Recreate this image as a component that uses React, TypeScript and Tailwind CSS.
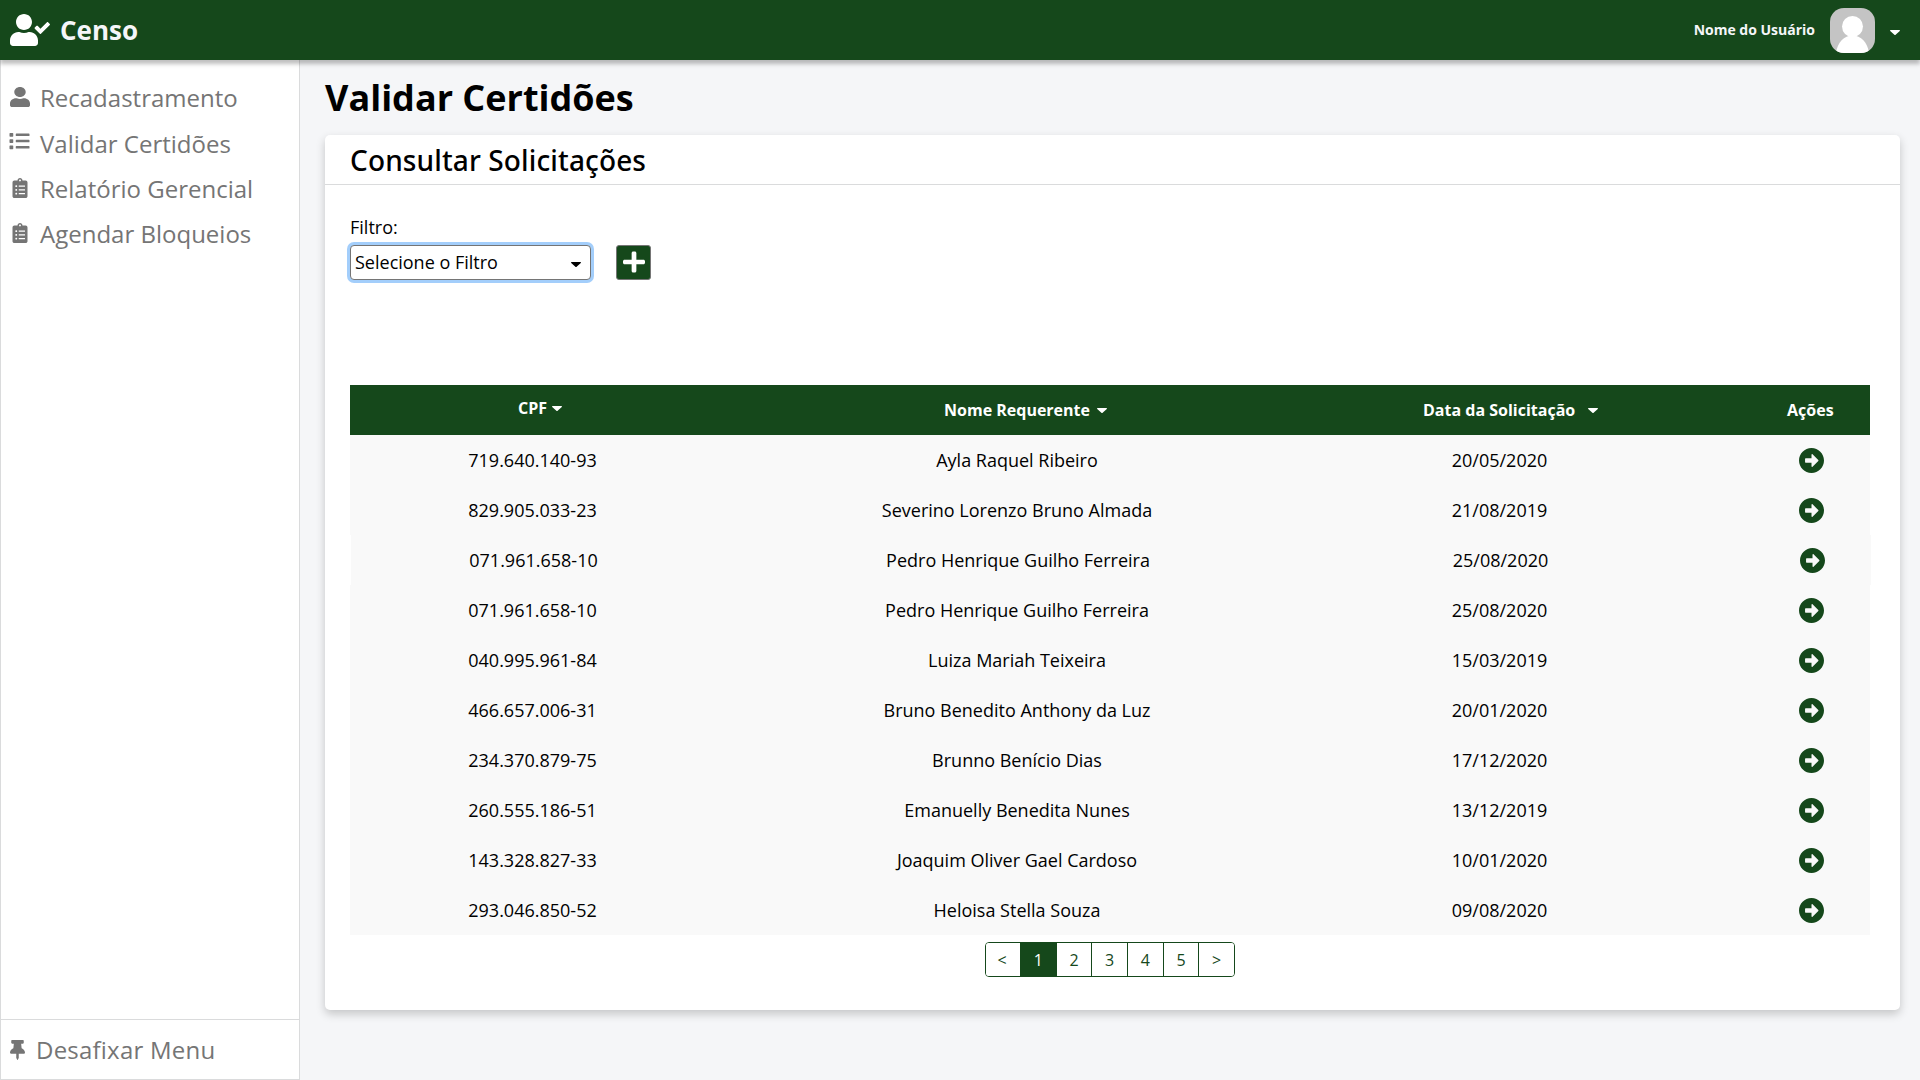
import React from "react";
import {
  FaArrowAltCircleRight,
  FaClipboardList,
  FaList,
  FaPlus,
  FaThumbtack,
  FaUser,
  FaUserCheck,
} from "react-icons/fa";

const rows = [
  ["719.640.140-93", "Ayla Raquel Ribeiro", "20/05/2020"],
  ["829.905.033-23", "Severino Lorenzo Bruno Almada", "21/08/2019"],
  ["071.961.658-10", "Pedro Henrique Guilho Ferreira", "25/08/2020"],
  ["071.961.658-10", "Pedro Henrique Guilho Ferreira", "25/08/2020"],
  ["040.995.961-84", "Luiza Mariah Teixeira", "15/03/2019"],
  ["466.657.006-31", "Bruno Benedito Anthony da Luz", "20/01/2020"],
  ["234.370.879-75", "Brunno Benício Dias", "17/12/2020"],
  ["260.555.186-51", "Emanuelly Benedita Nunes", "13/12/2019"],
  ["143.328.827-33", "Joaquim Oliver Gael Cardoso", "10/01/2020"],
  ["293.046.850-52", "Heloisa Stella Souza", "09/08/2020"],
];

function Caret({ className }: { className: string }) {
  return (
    <svg viewBox="0 0 10 5" className={className} fill="currentColor">
      <path d="M0.6 0H9.4C9.9 0 10.2 .6 9.8 1L5.6 4.8C5.3 5.1 4.7 5.1 4.4 4.8L.2 1C-.2 .6 .1 0 .6 0Z" />
    </svg>
  );
}

function Avatar() {
  return (
    <svg viewBox="0 0 45 45" className="h-[45px] w-[45px] rounded-[14px] bg-[#c4c4c4]">
      <circle cx="22.5" cy="18.5" r="10.5" fill="#fff" />
      <path d="M6 45C7.500 34 14 27.500 22.500 27.500S37.500 34 39 45Z" fill="#fff" />
    </svg>
  );
}

function Header() {
  return (
    <header className="relative z-10 flex h-[60px] shrink-0 items-center bg-[#15481b] pl-[10px] pr-5 text-white shadow-[0_4px_4px_rgba(0,0,0,0.25)]">
      <FaUserCheck className="h-8 w-10" />
      <span className="ml-[10px] text-[26px] font-bold text-[#f5f6f9]">Censo</span>
      <span className="ml-auto text-sm font-bold text-[#f5f6f9]">Nome do Usuário</span>
      <div className="ml-[15px]">
        <Avatar />
      </div>
      <Caret className="ml-[15px] mt-1 h-[5px] w-[10px]" />
    </header>
  );
}

function Sidebar() {
  return (
    <aside className="flex w-[300px] shrink-0 flex-col border border-t-0 border-[#dadbdc] bg-white text-2xl text-[#757575]">
      <nav className="flex flex-1 flex-col pl-[9px] pt-[15px]">
        <a className="flex h-[46px] items-center">
          <FaUser className="mb-[3px] h-5 w-5" preserveAspectRatio="none" />
          <span className="ml-[10px]">Recadastramento</span>
        </a>
        <a className="flex h-[45px] items-center">
          <FaList className="mb-[6px] -ml-px h-5 w-[21px]" />
          <span className="ml-[10px]">Validar Certidões</span>
        </a>
        <a className="flex h-[45px] items-center">
          <FaClipboardList className="mb-[2px] h-5 w-5" />
          <span className="ml-[10px]">Relatório Gerencial</span>
        </a>
        <a className="flex h-[45px] items-center">
          <FaClipboardList className="mb-[2px] h-5 w-5" />
          <span className="ml-[10px]">Agendar Bloqueios</span>
        </a>
      </nav>
      <a className="flex h-[60px] items-center border-t border-[#dadbdc] pl-[9px]">
        <FaThumbtack className="h-5 w-[15px]" />
        <span className="ml-[11px] tracking-[0.22px]">Desafixar Menu</span>
      </a>
    </aside>
  );
}

function Table() {
  return (
    <div className="mt-[105px] w-[1520px] text-black">
      <div className="grid h-[50px] grid-cols-[365px_604px_362px_189px] items-center bg-[#15481b] font-bold text-white">
        <div className="mb-1 flex items-center pl-[168px]">
          CPF
          <Caret className="ml-[5px] h-[5px] w-[10px]" />
        </div>
        <div className="flex items-center pl-[229px]">
          Nome Requerente
          <Caret className="ml-[7px] h-[5px] w-[10px]" />
        </div>
        <div className="flex items-center pl-[104px]">
          Data da Solicitação
          <Caret className="ml-[13px] h-[5px] w-[10px]" />
        </div>
        <div className="pl-[106px]">Ações</div>
      </div>
      {rows.map(([cpf, name, date], i) => (
        <div
          key={i}
          className={
            "grid h-[50px] grid-cols-[365px_604px_362px_189px] items-center bg-[#f9f9f9] text-center text-lg" +
            (i === 2 ? " translate-x-px" : "")
          }
        >
          <span>{cpf}</span>
          <span>{name}</span>
          <span className="pr-px">{date}</span>
          <FaArrowAltCircleRight
            viewBox="8 8 496 496"
            className="ml-[118px] mt-px h-[25px] w-[25px] text-[#15481b]"
          />
        </div>
      ))}
    </div>
  );
}

function Pagination() {
  return (
    <div className="ml-[635px] mt-[7px] flex h-[35px] w-[250px] divide-x divide-[#15481b] overflow-hidden rounded-[4px] border border-[#15481b] text-base text-[#15481b]">
      {["<", "1", "2", "3", "4", "5", ">"].map((p) => (
        <button
          key={p}
          className={
            "flex items-center justify-center " +
            (p === "<" ? "w-[35px] pr-0.5 " : "flex-1 ") +
            (p === "1" ? "bg-[#15481b] text-white" : "bg-white")
          }
        >
          {p}
        </button>
      ))}
    </div>
  );
}

export default function App() {
  return (
    <div className="flex h-[1080px] w-[1920px] flex-col overflow-hidden bg-[#f5f6f8] font-['Open_Sans','Noto_Sans',sans-serif]">
      <Header />
      <div className="flex flex-1">
        <Sidebar />
        <main className="flex-1 pl-[25px] pr-5 text-black">
          <h1 className="flex h-[75px] items-center text-4xl font-bold">Validar Certidões</h1>
          <section className="h-[875px] rounded-[5px] bg-white shadow-[0_4px_10px_rgba(0,0,0,0.2)]">
            <h2 className="flex h-[50px] items-center border-b border-[#dadbdc] pl-[25px] font-['Noto_Sans',sans-serif] text-[28px] font-medium tracking-[0.13px]">
              Consultar Solicitações
            </h2>
            <div className="pl-[25px] pt-[30px]">
              <label className="block h-[30px] text-lg leading-[25px]">Filtro:</label>
              <div className="flex h-[35px] gap-[25px]">
                <div className="flex w-[241px] items-center rounded-[4px] border border-[#757575] bg-white pl-1 pr-[9px] text-lg shadow-[0_0_0_3px_#a3cefb]">
                  <span className="mb-0.5 flex-1">Selecione o Filtro</span>
                  <Caret className="mt-[3px] h-[5px] w-[10px]" />
                </div>
                <button className="flex w-[35px] items-center justify-center rounded-[3px] border border-[#757575] bg-[#15481b] text-white">
                  <FaPlus className="mb-px ml-px h-6 w-[22px]" preserveAspectRatio="none" />
                </button>
              </div>
              <Table />
              <Pagination />
            </div>
          </section>
        </main>
      </div>
    </div>
  );
}
